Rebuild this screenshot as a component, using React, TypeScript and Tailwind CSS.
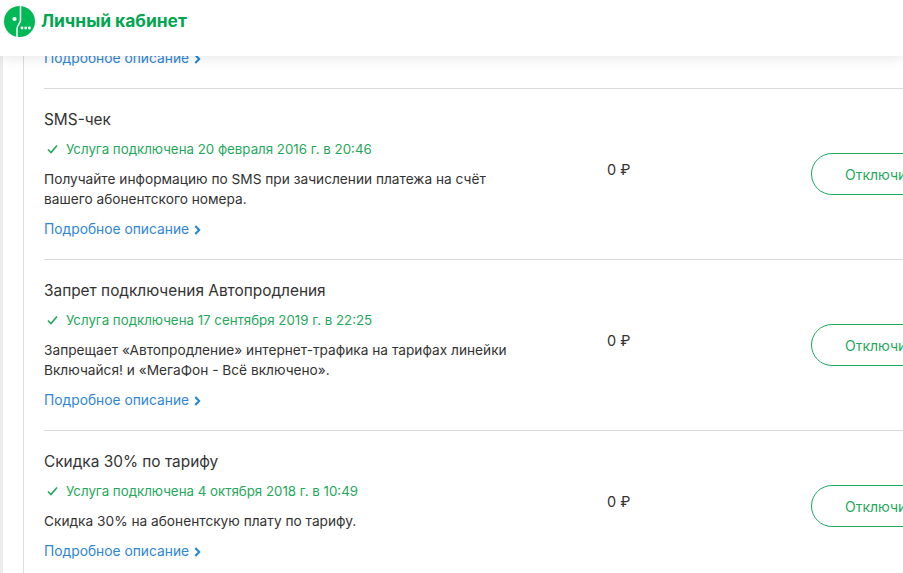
const services = [
  {
    title: "SMS-чек",
    status: "Услуга подключена 20 февраля 2016 г. в 20:46",
    lines: ["Получайте информацию по SMS при зачислении платежа на счёт", "вашего абонентского номера."],
  },
  {
    title: "Запрет подключения Автопродления",
    status: "Услуга подключена 17 сентября 2019 г. в 22:25",
    lines: ["Запрещает «Автопродление» интернет-трафика на тарифах линейки", "Включайся! и «МегаФон - Всё включено»."],
  },
  {
    title: "Скидка 30% по тарифу",
    status: "Услуга подключена 4 октября 2018 г. в 10:49",
    lines: ["Скидка 30% на абонентскую плату по тарифу."],
  },
];

function Chevron() {
  return (
    <svg width="7" height="10" viewBox="0 0 7 10" fill="none" className="ml-[5px] mt-px">
      <path d="M1.3 1 L5.2 5 L1.3 9" stroke="#1f84db" strokeWidth="2" />
    </svg>
  );
}

function MoreLink() {
  return (
    <div className="flex items-center text-[13.8px] leading-5 text-[#2f86d6]">
      Подробное описание
      <Chevron />
    </div>
  );
}

function Logo() {
  return (
    <svg width="31" height="31" viewBox="0 0 31 31">
      <circle cx="15.5" cy="15.5" r="15.5" fill="#00b956" />
      <path d="M16.5 0 V14 C16.5 18 13 18.5 13 23 V31" stroke="#fff" strokeWidth="1.5" fill="none" />
      <circle cx="10.5" cy="13" r="2.1" fill="#fff" />
      <circle cx="18" cy="22" r="1.4" fill="#fff" />
      <circle cx="21.7" cy="22" r="1.4" fill="#fff" />
      <circle cx="25.4" cy="22" r="1.4" fill="#fff" />
    </svg>
  );
}

export default function App() {
  return (
    <div className="relative h-[573px] w-[903px] overflow-hidden bg-white font-['Inter','Liberation_Sans',sans-serif] text-[#333]">
      <header className="absolute inset-x-0 top-0 z-10 flex h-14 items-center gap-[6px] bg-white pb-[13px] pl-1 shadow-[0_2px_12px_rgba(0,0,0,0.1)]">
        <Logo />
        <span className="text-[17.4px] font-bold text-[#00a650]">Личный кабинет</span>
      </header>

      <div className="h-full border-l-[3px] border-[#ececec] pl-5">
        <main className="h-full border-l border-[#dcdcdc] bg-white pl-5">
          <div className="flex h-[89px] items-end border-b border-[#d9d9d9] pb-[20px]">
            <MoreLink />
          </div>
          {services.map((s) => (
            <section key={s.title} className="flex items-center border-b border-[#d9d9d9] pt-[21px] pb-5">
              <div className="w-[563px] shrink-0">
                <h3 className="text-[15.4px] leading-5">{s.title}</h3>
                <div className="mt-[9px] flex items-center text-[13.3px] leading-5 text-[#1fa85c]">
                  <svg width="11" height="10" viewBox="0 0 11 10" fill="none" className="ml-[3px] mr-2">
                    <path d="M1 5.5 L4 8.5 L10 1.5" stroke="#1fa85c" strokeWidth="1.6" />
                  </svg>
                  {s.status}
                </div>
                <div className="mt-[10px] text-[13.7px] leading-5 text-[#333]">
                  {s.lines.map((l) => (
                    <p key={l} className="whitespace-nowrap">{l}</p>
                  ))}
                </div>
                <div className="mt-[10px]">
                  <MoreLink />
                </div>
              </div>
              <div className="w-[204px] shrink-0 pb-[10px] text-[14.5px] leading-5">0 ₽</div>
              <div className="mb-px flex h-[42px] w-[150px] shrink-0 items-center rounded-full border border-[#1fa85c] pl-[33px] text-[14px] whitespace-nowrap text-[#1fa85c]">
                Отключить
              </div>
            </section>
          ))}
        </main>
      </div>
    </div>
  );
}
